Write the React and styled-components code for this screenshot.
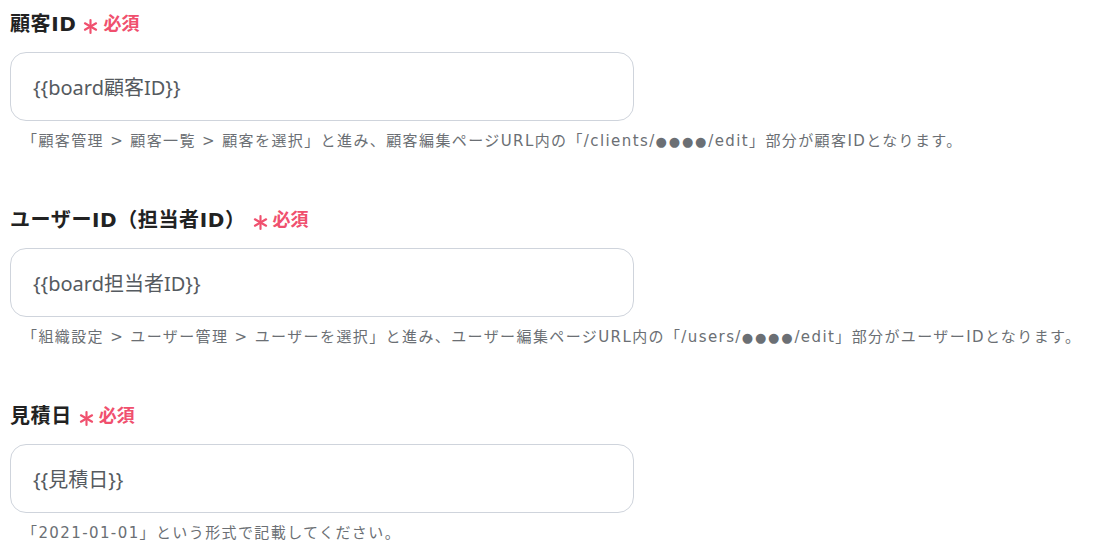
import React from "react";
import styled, { createGlobalStyle } from "styled-components";

const GlobalStyle = createGlobalStyle`
  body {
    margin: 0;
    background: #ffffff;
    font-family: "DejaVu Sans", "Noto Sans CJK JP", sans-serif;
  }
`;

const Page = styled.div`
  display: flex;
  flex-direction: column;
  gap: 51px;
  padding: 7px 0 0 10px;
`;

const Field = styled.div`
  display: flex;
  flex-direction: column;
`;

const LabelRow = styled.div`
  display: flex;
  align-items: center;
  height: 30px;
  margin-bottom: 15px;
`;

const Label = styled.span`
  font-size: 20px;
  font-weight: 700;
  letter-spacing: 0.6px;
  color: #222222;
`;

const Required = styled.span`
  display: flex;
  align-items: center;
  gap: 5px;
  margin-left: 7px;
  color: #f0506e;
  font-family: "Noto Sans CJK JP", sans-serif;
  font-size: 18px;
  font-weight: 700;
  svg {
    margin-top: 8px;
  }
`;

const Input = styled.div`
  box-sizing: border-box;
  width: 624px;
  height: 69px;
  display: flex;
  align-items: center;
  padding-left: 22px;
  border: 1px solid #cfd4dc;
  border-radius: 16px;
  font-family: "Noto Sans", "Noto Sans CJK JP", sans-serif;
  font-size: 20px;
  color: #555a60;
`;

const Help = styled.p`
  height: 22px;
  margin: 9px 0 0 12px;
  font-size: 15px;
  line-height: 22px;
  letter-spacing: 1.4px;
  color: #6b6f74;
  white-space: nowrap;
`;

const Dots = styled.span`
  font-size: 13px;
  line-height: 1;
  letter-spacing: 1.8px;
`;

function Asterisk() {
  return (
    <svg width="15" height="15" viewBox="0 0 14 14">
      <g stroke="#f0506e" strokeWidth="2" strokeLinecap="round">
        <line x1="7" y1="1" x2="7" y2="13" />
        <line x1="1.8" y1="4" x2="12.2" y2="10" />
        <line x1="1.8" y1="10" x2="12.2" y2="4" />
      </g>
    </svg>
  );
}

function HelpText({ text }) {
  const parts = text.split("●●●●");
  return (
    <Help>
      {parts.map((p, i) => (
        <React.Fragment key={i}>
          {p}
          {i < parts.length - 1 && <Dots>●●●●</Dots>}
        </React.Fragment>
      ))}
    </Help>
  );
}

const fields = [
  {
    label: "顧客ID",
    value: "{{board顧客ID}}",
    help: "「顧客管理 > 顧客一覧 > 顧客を選択」と進み、顧客編集ページURL内の「/clients/●●●●/edit」部分が顧客IDとなります。",
  },
  {
    label: "ユーザーID（担当者ID）",
    value: "{{board担当者ID}}",
    help: "「組織設定 > ユーザー管理 > ユーザーを選択」と進み、ユーザー編集ページURL内の「/users/●●●●/edit」部分がユーザーIDとなります。",
  },
  {
    label: "見積日",
    value: "{{見積日}}",
    help: "「2021-01-01」という形式で記載してください。",
  },
];

export default function App() {
  return (
    <>
      <GlobalStyle />
      <Page>
        {fields.map((f) => (
          <Field key={f.label}>
            <LabelRow>
              <Label>{f.label}</Label>
              <Required>
                <Asterisk />
                必須
              </Required>
            </LabelRow>
            <Input>{f.value}</Input>
            <HelpText text={f.help} />
          </Field>
        ))}
      </Page>
    </>
  );
}
